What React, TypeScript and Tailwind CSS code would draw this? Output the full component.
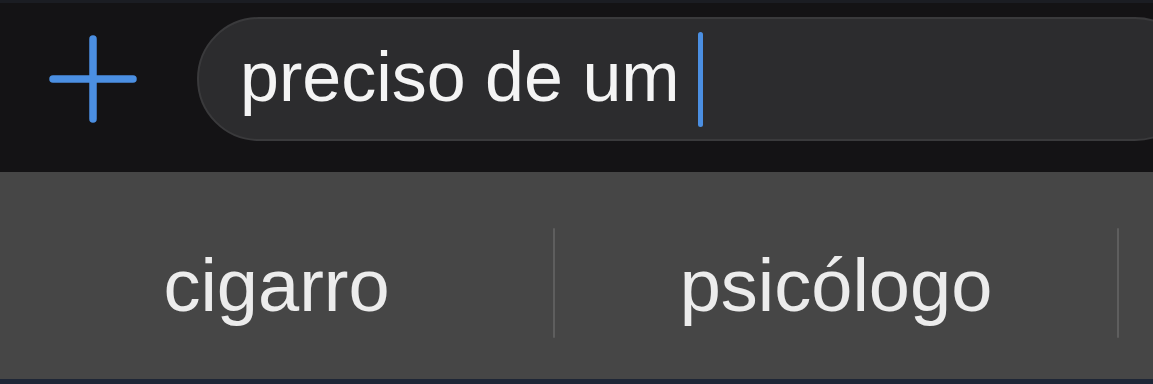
import React from "react";

const suggestions = ["cigarro", "psicólogo", ""];

function PlusIcon() {
    return (
        <svg width="88" height="88" viewBox="0 0 88 88" className="shrink-0">
            <path
                d="M44 4v80M4 44h80"
                stroke="#4b8fe2"
                strokeWidth="7.5"
                strokeLinecap="round"
                fill="none"
            />
        </svg>
    );
}

export default function App() {
    return (
        <div
            className="w-[1153px] h-[384px] overflow-hidden flex flex-col bg-[#141315]"
            style={{ fontFamily: '"Liberation Sans", Arial, sans-serif' }}
        >
            {/* Input bar */}
            <div className="h-[172px] shrink-0 border-t-[3px] border-[#1b1d23] bg-[#141315] pt-[14px]">
                <div className="flex items-center h-[124px] pl-[49px]">
                    <PlusIcon />
                    <div className="ml-[60px] w-[1000px] h-[124px] shrink-0 rounded-full bg-[#2c2c2e] border-2 border-[#3a3a3c] flex items-center pl-[41px]">
                        <span className="text-[70px] leading-none text-[#f4f4f4] mb-[4px]">
                            preciso de um
                        </span>
                        <span className="ml-[18px] w-[5px] h-[95px] rounded-full bg-[#4b8fe2]" />
                    </div>
                </div>
            </div>

            {/* Suggestions bar */}
            <div className="h-[207px] shrink-0 bg-[#464646] flex items-center pt-[20px]">
                {suggestions.map((word, i) => (
                    <React.Fragment key={i}>
                        {i > 0 && (
                            <div className="w-[2px] h-[110px] mb-[6px] shrink-0 rounded-full bg-[#5e5e5e]" />
                        )}
                        <div
                            className={
                                i === 0
                                    ? "w-[553px] shrink-0 flex justify-center"
                                    : i === 1
                                    ? "w-[562px] shrink-0 flex justify-center"
                                    : "flex-1"
                            }
                        >
                            <span className="text-[74px] leading-none text-[#ececec]">{word}</span>
                        </div>
                    </React.Fragment>
                ))}
            </div>

            <div className="flex-1 bg-[#1e2636]" />
        </div>
    );
}
